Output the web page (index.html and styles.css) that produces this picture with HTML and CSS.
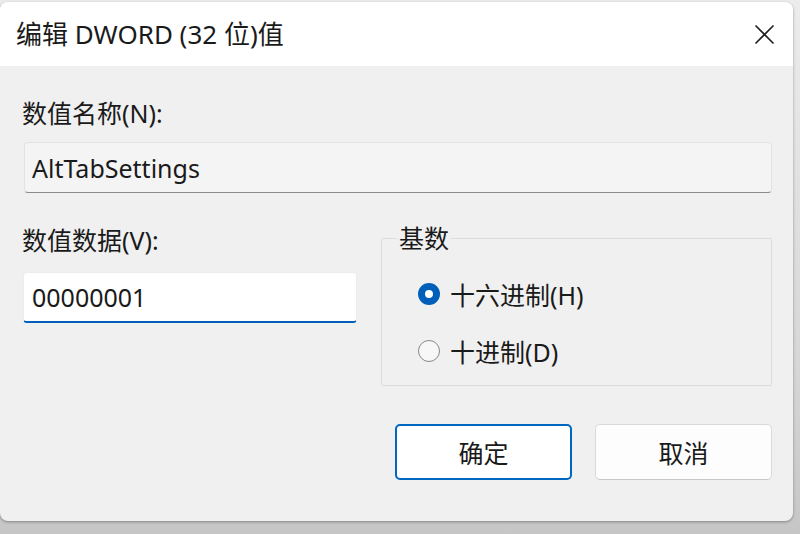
FILE: index.html
```html
<!DOCTYPE html>
<html lang="zh-CN">
<head>
    <meta charset="UTF-8">
    <meta name="viewport" content="width=device-width, initial-scale=1.0">
    <title>编辑 DWORD (32 位)值</title>
    <link rel="stylesheet" href="styles.css">
</head>
<body>
    <div class="window">
        <!-- Title bar -->
        <div class="titlebar">
            <span class="title">编辑 DWORD (32 位)值</span>
            <button class="close-button" aria-label="关闭">
                <svg width="21" height="21" viewBox="0 0 21 21">
                    <path d="M1.5 1.5 L19.5 19.5 M19.5 1.5 L1.5 19.5" stroke="#1f1f1f" stroke-width="1.6" fill="none"/>
                </svg>
            </button>
        </div>

        <div class="content">
            <label class="field-label" for="value-name">数值名称(N):</label>
            <input class="name-input" id="value-name" type="text" value="AltTabSettings" readonly>

            <div class="data-row">
                <div class="data-column">
                    <label class="field-label" for="value-data">数值数据(V):</label>
                    <input class="data-input" id="value-data" type="text" value="00000001">
                </div>

                <fieldset class="base-group">
                    <legend>基数</legend>
                    <label class="radio-row">
                        <span class="radio checked"></span>
                        <span>十六进制(H)</span>
                    </label>
                    <label class="radio-row">
                        <span class="radio"></span>
                        <span>十进制(D)</span>
                    </label>
                </fieldset>
            </div>

            <div class="button-container">
                <button class="dialog-button primary">确定</button>
                <button class="dialog-button">取消</button>
            </div>
        </div>
    </div>
</body>
</html>
```

FILE: styles.css
```css
body {
    margin: 0;
    height: 534px;
    overflow: hidden;
    font-family: 'Noto Sans', 'Noto Sans CJK SC', sans-serif;
    color: #1a1a1a;
    background: linear-gradient(to bottom, #ececec 0%, #d6d6d6 70%, #c6c6c6 100%);
}

.window {
    width: 793px;
    height: 519px;
    margin-top: 2px;
    background-color: #f0f0f0;
    border-radius: 8px;
    overflow: hidden;
    box-shadow: 0 1px 3px rgba(0, 0, 0, 0.35);
}

/* Title bar */
.titlebar {
    height: 64px;
    display: flex;
    align-items: center;
    justify-content: space-between;
    padding: 0 18px 0 16px;
    background-color: #fff;
}

.title {
    font-size: 26px;
    line-height: 28px;
}

.close-button {
    width: 21px;
    height: 21px;
    padding: 0;
    border: none;
    background: none;
    display: flex;
}

.content {
    padding: 33px 21px 0 22px;
}

.field-label {
    display: block;
    font-size: 25px;
    line-height: 28px;
}

input {
    font-family: inherit;
    font-size: 25px;
    color: #1a1a1a;
    box-sizing: border-box;
    outline: none;
}

.name-input {
    display: block;
    width: 748px;
    height: 51px;
    margin: 15px 0 0 2px;
    padding: 0 7px;
    background-color: #f4f4f4;
    border: 1px solid #e2e2e2;
    border-bottom-color: #8b8b8b;
    border-radius: 4px;
}

.data-row {
    display: flex;
    margin-top: 33px;
}

.data-column {
    width: 336px;
}

.data-input {
    display: block;
    width: 334px;
    height: 51px;
    margin: 18px 0 0 1px;
    padding: 0 8px;
    background-color: #fff;
    border: 1px solid #ececec;
    border-bottom: 2px solid #005fb8;
    border-radius: 4px;
}

/* Radix group */
.base-group {
    width: 392px;
    height: 160px;
    box-sizing: border-box;
    margin: 0 0 0 24px;
    padding: 0;
    border: 1px solid #dcdcdc;
    border-radius: 2px;
}

.base-group legend {
    margin-left: 15px;
    padding: 0 2px;
    font-size: 25px;
    line-height: 24px;
}

.radio-row {
    display: flex;
    align-items: center;
    gap: 10px;
    height: 32px;
    margin-left: 36px;
    font-size: 25px;
}

.radio-row:first-of-type {
    margin-top: 28px;
}

.radio-row + .radio-row {
    margin-top: 25px;
}

.radio {
    width: 22px;
    height: 22px;
    box-sizing: border-box;
    border: 1px solid #8a8a8a;
    border-radius: 50%;
    background-color: #f7f7f7;
}

.radio.checked {
    border: 7px solid #005fb8;
    background-color: #fff;
}

.button-container {
    display: flex;
    justify-content: flex-end;
    gap: 23px;
    margin-top: 38px;
}

.dialog-button {
    width: 177px;
    height: 56px;
    font-family: inherit;
    font-size: 25px;
    color: #1a1a1a;
    background-color: #fdfdfd;
    border: 1px solid #dadada;
    border-bottom-color: #c8c8c8;
    border-radius: 5px;
}

.dialog-button.primary {
    border: 2px solid #0067c0;
    background-color: #fff;
}
```
